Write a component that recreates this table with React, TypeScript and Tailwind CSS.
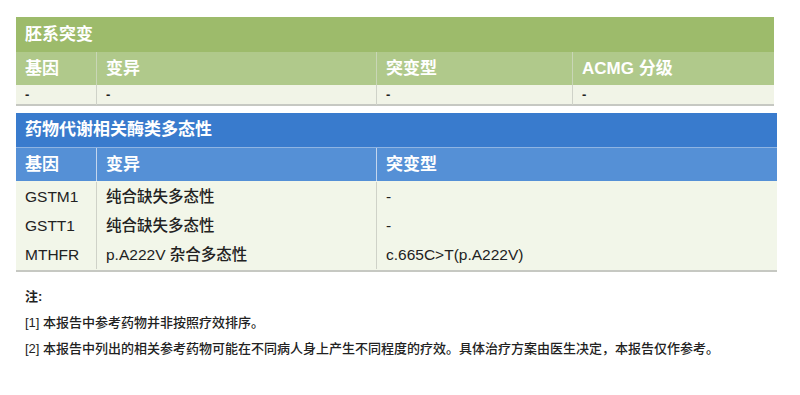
import React from "react";

const FONT = { fontFamily: '"Liberation Sans", Arial, "Noto Sans CJK SC", sans-serif' };

const GERMLINE_HEAD = ["基因", "变异", "突变型", "ACMG 分级"];
const PGX_HEAD = ["基因", "变异", "突变型"];
const PGX_ROWS = [
  ["GSTM1", "纯合缺失多态性", "-"],
  ["GSTT1", "纯合缺失多态性", "-"],
  ["MTHFR", "p.A222V 杂合多态性", "c.665C>T(p.A222V)"],
];

export default function App() {
  return (
    <div className="w-[800px] h-[395px] bg-white overflow-hidden pl-[16px] pt-[17px]" style={FONT}>
      {/* 胚系突变 */}
      <div className="w-[758px] border-b-2 border-[#c6c8c2]">
        <div className="h-[35px] bg-[#9dbb6b] flex items-center pl-[9px] text-white font-bold text-[17px]">
          胚系突变
        </div>
        <div className="grid grid-cols-[80px_280px_196px_1fr] h-[33px] bg-[#b0c98b] text-white font-bold text-[17px]">
          {GERMLINE_HEAD.map((h, i) => (
            <div key={h} className={`flex items-center pl-[9px] ${i > 0 ? "border-l border-[#c9d6b6]" : ""}`}>
              {h}
            </div>
          ))}
        </div>
        <div className="grid grid-cols-[80px_280px_196px_1fr] h-[19px] bg-[#f1f4e7] text-[#222] text-[13px] font-bold">
          {GERMLINE_HEAD.map((h, i) => (
            <div key={h} className={`flex items-center pl-[9px] ${i > 0 ? "border-l border-[#cfd2c8]" : ""}`}>
              -
            </div>
          ))}
        </div>
      </div>

      {/* 药物代谢相关酶类多态性 */}
      <div className="w-[761px] mt-[7px] border-b-2 border-[#c6c8c2]">
        <div className="h-[35px] bg-[#397bcd] flex items-center pl-[9px] text-white font-bold text-[17px] border-b border-[#8fb4e2]">
          药物代谢相关酶类多态性
        </div>
        <div className="grid grid-cols-[80px_280px_1fr] h-[33px] bg-[#5590d6] text-white font-bold text-[17px]">
          {PGX_HEAD.map((h, i) => (
            <div key={h} className={`flex items-center pl-[9px] ${i > 0 ? "border-l border-[#c4d6ee]" : ""}`}>
              {h}
            </div>
          ))}
        </div>
        <div className="bg-[#f2f6e9] py-[1px] text-[#222] text-[15.5px] font-medium">
          {PGX_ROWS.map((r) => (
            <div key={r[0]} className="grid grid-cols-[80px_280px_1fr] h-[29px]">
              {r.map((c, i) => (
                <div key={i} className={`flex items-center pl-[9px] ${i > 0 ? "border-l border-[#cfd2c8]" : ""}`}>
                  {c}
                </div>
              ))}
            </div>
          ))}
        </div>
      </div>

      {/* 注 */}
      <div className="pl-[9px] pt-[16px] text-[13px] text-[#222] font-medium flex flex-col gap-[9px]">
        <p className="font-bold leading-[17px]">注:</p>
        <p className="leading-[17px]">[1] 本报告中参考药物并非按照疗效排序。</p>
        <p className="leading-[17px]">[2] 本报告中列出的相关参考药物可能在不同病人身上产生不同程度的疗效。具体治疗方案由医生决定，本报告仅作参考。</p>
      </div>
    </div>
  );
}
